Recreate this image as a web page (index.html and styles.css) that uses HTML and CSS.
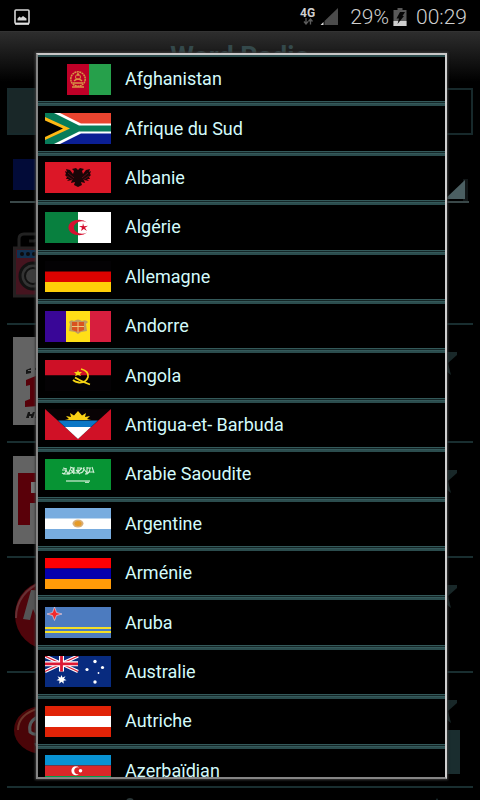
FILE: index.html
```html
<!DOCTYPE html>
<html lang="fr">
<head>
<meta charset="utf-8">
<meta name="viewport" content="width=device-width, initial-scale=1">
<title>Word Radio</title>
<link rel="stylesheet" href="styles.css">
</head>
<body>
<header class="status">
  <svg class="shot" width="16" height="16" viewBox="0 0 16 16"><rect x="1" y="1" width="14" height="13.5" rx="1" fill="none" stroke="#d6d6d6" stroke-width="1.6"/><path d="M1 14.8h14" stroke="#e2e2e2" stroke-width="2"/><path d="M3.500 11.500V9.500l2-2 1.500 1.200L9 7l3.500 2.500v2z" fill="#d6d6d6"/></svg>
  <div class="network"><span>4G</span><svg width="10" height="7" viewBox="0 0 10 7"><path d="M3 0v5M1 3.500l2 2.500 2-2.500M7.500 6.500V1.500M5.500 3.500l2-2.500 2 2.500" fill="none" stroke="#5c5c5c" stroke-width="1.300"/></svg></div>
  <svg class="signal" width="18" height="17" viewBox="0 0 18 17"><path d="M18 0v17H4.500V13z" fill="#4b4b4b"/><path d="M3.500 14v3H.5z" fill="#ddd"/></svg>
  <span class="level">29%</span>
  <svg class="battery" width="14" height="18" viewBox="0 0 14 18"><path d="M4.500 0h5v2H13.500v16H.5V2h4z" fill="#595959"/><path d="M.5 13h13v5H.5z" fill="#cfcfcf"/><path d="M7 4h5L9.500 8H11l-6.500 8L6 10.500H3.500z" fill="#050505"/></svg>
  <time class="clock">00:29</time>
</header>
<main class="page">
  <h1 class="title">Word Radio</h1>
  <div class="tools"><div class="tool tool-on"></div><div class="tool"></div></div>
  <div class="picker"><div class="picker-flag"></div><svg width="24" height="22" viewBox="0 0 24 22"><path d="M18 0h5v22h-5z" fill="#111617"/><path d="M20 1v19H0z" fill="#4b5f62"/></svg></div>
  <div class="stations">
    <div class="station first"><svg width="66" height="66" viewBox="0 0 66 66"><path d="M6 16V7q0-5 5-5h44q5 0 5 5v9" fill="none" stroke="#222" stroke-width="3"/><path d="M16 9h5l6-2" fill="none" stroke="#1c1c1c" stroke-width="3"/><rect x="1.500" y="16" width="63" height="48" fill="#45141f" stroke="#242021" stroke-width="3"/><path d="M4 18h58v8H4z" fill="#10304f"/><g fill="#0b0b0d"><circle cx="9" cy="22" r="2"/><circle cx="15" cy="22" r="2"/><circle cx="21" cy="22" r="2"/></g><circle cx="20" cy="44" r="13" fill="#333" stroke="#121212" stroke-width="3"/><circle cx="20" cy="44" r="8" fill="#3b3b3b" stroke="#111" stroke-width="2"/></svg></div>
    <div class="station"><svg width="88" height="88" viewBox="0 0 88 88"><path d="M0 0h88v88H0z" fill="#636363"/><path d="M13 43l17-7v25l-5 1v7l-13 1v-6l5-2V48l-4 1z" fill="#570009"/><path d="M13 33l5-2v2h-3v1l3 0v2l-5 1zM22 31l4-1v3h-4zM13 81l2-6h2v2h2l1-2h2l-2 6h-2v-2h-2v2zM22 81l2-6h4l-1 2h-2l-1 4z" fill="#151515"/></svg><svg class="star" viewBox="0 0 30 28"><path d="M0 5h10L15 0l4 5h11v3l-9 8 3 12-9-7-9 7 2-12z" fill="#192829"/></svg></div>
    <div class="station"><svg width="88" height="88" viewBox="0 0 88 88"><path d="M0 0h88v88H0z" fill="#636363"/><path d="M5 17h30v30H17v22H5z" fill="#590009"/><path d="M18 26h17v11H18z" fill="#777"/></svg><svg class="star" viewBox="0 0 30 28"><path d="M0 5h10L15 0l4 5h11v3l-9 8 3 12-9-7-9 7 2-12z" fill="#192829"/></svg></div>
    <div class="station"><svg width="72" height="70" viewBox="0 0 72 70"><circle cx="37" cy="35" r="35" fill="#50050b"/><path d="M31 1Q3 12 3 38" fill="none" stroke="#663034" stroke-width="2"/><path d="M10 39l8-29 18 1v12l-11 5 7 13-7-1-5-11-3 11z" fill="#555"/></svg><svg class="star" viewBox="0 0 30 28"><path d="M0 5h10L15 0l4 5h11v3l-9 8 3 12-9-7-9 7 2-12z" fill="#192829"/></svg></div>
    <div class="station"><svg width="60" height="50" viewBox="0 0 60 50"><ellipse cx="30" cy="25" rx="29" ry="24" fill="#4a0508"/><path d="M27 3Q5 9 5 25" fill="none" stroke="#6b3429" stroke-width="2"/><path d="M25 12q-10 4-8 15 8 6 10-4M22 40l5-2" fill="none" stroke="#555b5c" stroke-width="3"/></svg><svg class="star" viewBox="0 0 30 28"><path d="M0 5h10L15 0l4 5h11v3l-9 8 3 12-9-7-9 7 2-12z" fill="#192829"/></svg><div class="scroll-thumb"></div></div>
    <div class="peek"><svg width="8" height="8" viewBox="0 0 8 8"><circle cx="4" cy="4" r="4" fill="#293536"/></svg><svg width="8" height="8" viewBox="0 0 8 8"><path d="M4 0l4 8H0z" fill="#1d3133"/></svg></div>
  </div>
</main>
<section class="dialog" role="dialog" aria-label="Pays">
<ul class="countries">
  <li><button type="button"><svg class="flag" viewBox="0 0 66 31"><path d="M22 0h22v31H22z" fill="#be0027"/><path d="M44 0h22v31H44z" fill="#26a04b"/><g fill="none" stroke="#d99545"><circle cx="33" cy="15" r="7.200" stroke-width="1.500" stroke-dasharray="2 .5"/><circle cx="33" cy="13" r="2.500"/><path d="M28 19h10M29 17q4-4 8 0M27 23h12M33 9v3" stroke-width="1.500"/></g></svg><span>Afghanistan</span></button></li>
  <li><button type="button"><svg class="flag" viewBox="0 0 66 31"><path d="M0 0h66v15H0z" fill="#e9442f"/><path d="M0 15h66v16H0z" fill="#0b1f94"/><path d="M0 0h15l21 10.500h30v10H36L15 31H0z" fill="#fff"/><path d="M0 0h9l25 12.500h32v6H34L9 31H0z" fill="#087c5a"/><path d="M0 4l25 11.500L0 27z" fill="#ffb915"/><path d="M0 7.500l18 8L0 24z" fill="#000"/></svg><span>Afrique du Sud</span></button></li>
  <li><button type="button"><svg class="flag" viewBox="0 0 66 31"><path d="M0 0h66v31H0z" fill="#dc1727"/><path d="M33 8l-2-2-4 1 2 2-1 3-3-4-4-1 1 3-2-1 1 3-1 1 2 2-1 2 3 0-2 2 5-1-1 3 4-1-1 3 4 2 4-2-1-3 4 1-1-3 5 1-2-2 3 0-1-2 2-2-1-1 1-3-2 1 1-3-4 1-3 4-1-3 2-2-4-1z" fill="#190507"/><path d="M23 11l6 5M22 14l6 4M43 11l-6 5M44 14l-6 4" stroke="#8d101c" stroke-width=".6"/></svg><span>Albanie</span></button></li>
  <li><button type="button"><svg class="flag" viewBox="0 0 66 31"><path d="M0 0h33v31H0z" fill="#08803f"/><path d="M33 0h33v31H33z" fill="#fff"/><path d="M42 10.500A10.500 7.800 0 1 0 42 20.500A8.500 6 0 1 1 42 10.500z" fill="#d51030"/><path d="M38 11l1 3.300 4-.6-3 2 2 3.300-3.200-2-2.800 2 1-3.200-3-1.800h3.500z" fill="#d51030"/></svg><span>Algérie</span></button></li>
  <li><button type="button"><svg class="flag" viewBox="0 0 66 31"><path d="M0 0h66v10.500H0z" fill="#030204"/><path d="M0 10.500h66V21H0z" fill="#dd0200"/><path d="M0 21h66v10H0z" fill="#ffce08"/></svg><span>Allemagne</span></button></li>
  <li><button type="button"><svg class="flag" viewBox="0 0 66 31"><path d="M0 0h21v31H0z" fill="#390697"/><path d="M21 0h24v31H21z" fill="#ffdf17"/><path d="M45 0h21v31H45z" fill="#d71e3e"/><path d="M24 11q2-3 5-1 4-3 8 0 4-2 6 1l-2 2 1 7-6 1-3 2-3-2-6-1 1-7z" fill="#bd9b61"/><path d="M27 11h12v8l-6 2-6-2z" fill="#d9521f"/><path d="M33 11v10M27 15.500h12" stroke="#edc77f"/></svg><span>Andorre</span></button></li>
  <li><button type="button"><svg class="flag" viewBox="0 0 66 31"><path d="M0 0h66v15.500H0z" fill="#ce1026"/><path d="M0 15.500h66V31H0z" fill="#040204"/><g fill="none" stroke="#f6d413" stroke-width="1.800"><path d="M36 9q8 2 7 8-2 6-9 5.500-4-.5-6-2.500"/><path d="M30 17.500q6 4 15 7"/></g><path d="M33 10l1 2h3l-2 2 1 2-3-1-3 1 1-2-2-2h3z" fill="#f6d413"/></svg><span>Angola</span></button></li>
  <li><button type="button"><svg class="flag" viewBox="0 0 66 31"><path d="M0 0h66v31H0z" fill="#d01126"/><path d="M0 0h66L33 30z" fill="#080204"/><path d="M20 11l4-1-3-3 5 1-1-4 4 2.500L33 2l4 4.500L41 4l-1 4 5-1-3 3 4 1H20z" fill="#fad215"/><path d="M13 11.500h40L46 18H20z" fill="#0b76c5"/><path d="M20 18h26L33 30z" fill="#fff"/></svg><span>Antigua-et- Barbuda</span></button></li>
  <li><button type="button"><svg class="flag" viewBox="0 0 66 31"><path d="M0 0h66v31H0z" fill="#079434"/><g fill="none" stroke="#d3efd8" stroke-width="1.100"><path d="M17 14q3 2 4-3l2 4 3-6M18 9l4 1M24 14q5 1 4-5M29 8v6h4V8M31 11l4 4M35 14q4 0 4-6M38 9l4 5V8M40 15q5 0 5-6M47 8l2 6M17 11h4M25 8l3 1M34 9h3M44 13h4M18 15h7M26 11l3 4M33 13l4-4M42 9h4"/><path d="M21 22h24" stroke-width="1.200"/><path d="M40 23.300h4"/></g></svg><span>Arabie Saoudite</span></button></li>
  <li><button type="button"><svg class="flag" viewBox="0 0 66 31"><path d="M0 0h66v31H0z" fill="#78acdf"/><path d="M0 10.500h66V21H0z" fill="#fff"/><ellipse cx="33" cy="15.500" rx="5.500" ry="4" fill="#d9ae76"/><ellipse cx="33" cy="15.500" rx="3.500" ry="2.500" fill="#e69b27"/></svg><span>Argentine</span></button></li>
  <li><button type="button"><svg class="flag" viewBox="0 0 66 31"><path d="M0 0h66v10.500H0z" fill="#ff0003"/><path d="M0 10.500h66V21H0z" fill="#0500ad"/><path d="M0 21h66v10H0z" fill="#ff9b08"/></svg><span>Arménie</span></button></li>
  <li><button type="button"><svg class="flag" viewBox="0 0 66 31"><path d="M0 0h66v31H0z" fill="#4c7bbf"/><path d="M0 21h66M0 25h66" stroke="#f4df24" stroke-width="2"/><path d="M9.500 0l2 5.500L17 7l-5.500 1.500-2 5-2-5L2 7l5.500-1.500z" fill="#f1292c" stroke="#d8d2e5" stroke-width=".7"/></svg><span>Aruba</span></button></li>
  <li><button type="button"><svg class="flag" viewBox="0 0 66 31"><path d="M0 0h66v31H0z" fill="#082b7f"/><path d="M0 0l33 15.500M33 0L0 15.500" stroke="#fff" stroke-width="3.500"/><path d="M0 0l33 15.500M33 0L0 15.500" stroke="#db1e36" stroke-width="1.200"/><path d="M16.500 0v15.500M0 7.800h33" stroke="#fff" stroke-width="5"/><path d="M16.500 0v15.500M0 7.800h33" stroke="#dc1834" stroke-width="2.800"/><path d="M16.500 19l1 2.500 3-1.200-1.500 2.500 2.500 1.500-3 .4.300 3-2.300-2-2.300 2 .3-3-3-.4 2.500-1.500-1.500-2.500 3 1.200z" fill="#fff"/><g fill="#fff"><circle cx="50" cy="5.500" r="1.700"/><circle cx="42" cy="13.500" r="1.600"/><circle cx="57.500" cy="11.500" r="1.600"/><circle cx="53.500" cy="17" r=".9"/><circle cx="50" cy="26" r="1.700"/></g></svg><span>Australie</span></button></li>
  <li><button type="button"><svg class="flag" viewBox="0 0 66 31"><path d="M0 0h66v31H0z" fill="#e12307"/><path d="M0 10h66v11H0z" fill="#fff"/></svg><span>Autriche</span></button></li>
  <li><button type="button"><svg class="flag" viewBox="0 0 66 31"><path d="M0 0h66v10.500H0z" fill="#0892d2"/><path d="M0 10.500h66V21H0z" fill="#da2729"/><path d="M0 21h66v10H0z" fill="#009e49"/><path d="M34 12.500a4.500 4.500 0 1 0 0 6.500a3.500 3.500 0 1 1 0-6.500z" fill="#fff"/><circle cx="35.500" cy="15.700" r="1.800" fill="#fff"/></svg><span>Azerbaïdjan</span></button></li>
</ul>
</section>
</body>
</html>
```
FILE: styles.css
```css
* { box-sizing: border-box; }
html, body { height: 100%; }
body {
  position: relative;
  display: flex;
  flex-direction: column;
  margin: 0;
  overflow: hidden;
  background: #000;
  color: #cfcfcf;
  font-family: Roboto, "Liberation Sans", sans-serif;
}
svg { display: block; flex: none; }
.status {
  display: flex;
  flex: none;
  align-items: center;
  height: 31px;
  padding: 2px 13px 0 14px;
  font-size: 21px;
  line-height: 24px;
  font-weight: 300;
}
.shot { margin-right: auto; }
.network {
  display: flex;
  flex-direction: column;
  align-items: center;
  margin-right: 5px;
  font-size: 12px;
  line-height: 10px;
  font-weight: 700;
}
.signal { margin-right: 12px; }
.level { margin-right: 4px; }
.battery { margin-right: 9px; }
.page {
  flex: 1;
  min-height: 0;
  overflow: hidden;
  background: linear-gradient(#2d2d2d, #000 50px);
  border-top: 1px solid #333;
}
.title {
  margin: 0;
  height: 56px;
  padding-top: 9px;
  text-align: center;
  font-size: 27px;
  line-height: 32px;
  font-weight: 700;
  color: #34494b;
}
.tools { display: grid; grid-template-columns: 1fr 1fr; height: 47px; margin: 0 7px; }
.tool { border: 2px solid #17292b; }
.tool-on { background: #192728; }
.picker {
  display: flex;
  justify-content: space-between;
  align-items: flex-end;
  height: 68px;
  margin: 0 11px 0 10px;
  padding-left: 3px;
  border-bottom: 2px solid #3a4849;
}
.picker-flag { width: 66px; height: 31px; margin-bottom: 11px; background: #020b38; }
.stations { margin: 0 7px; }
.station {
  display: flex;
  align-items: center;
  position: relative;
  height: 115px;
  padding-left: 6px;
  border-bottom: 2px solid #192e30;
}
.station.first { height: 122px; padding-top: 4px; }
.station.first + .station { height: 118px; padding-bottom: 4px; }
.star { position: absolute; right: 16px; top: 22px; width: 30px; height: 28px; }
.scroll-thumb { position: absolute; right: 13px; bottom: 12px; width: 30px; height: 44px; background: #1a2d2f; }
.peek { display: flex; justify-content: space-between; padding: 10px 32px 0 119px; }
.dialog {
  position: absolute;
  inset: 53px 33px 21px 36px;
  overflow: hidden;
  background: #000;
  border: 2px solid #858585;
  border-top-color: #c8c8c8;
  border-right-color: #d0d0d0;
  box-shadow: 0 0 2px 1px #3b3b3b;
}
.countries {
  display: grid;
  grid-template-rows: repeat(15, 1fr);
  height: 741px;
  margin: 0;
  padding: 0;
  list-style: none;
  background: #142627;
}
.countries li {
  display: grid;
  border: 0 solid #2b4c4d;
  border-top-width: 2px;
  border-bottom: 3px double #34595a;
}
.countries button {
  display: flex;
  align-items: center;
  gap: 14px;
  width: 100%;
  min-width: 0;
  padding: 0 7px;
  border: 0;
  background: #000;
  color: #d3fbfb;
  font: 400 18px/24px Roboto, "Liberation Sans", sans-serif;
  text-align: left;
}
.flag { width: 66px; height: 31px; }
```
